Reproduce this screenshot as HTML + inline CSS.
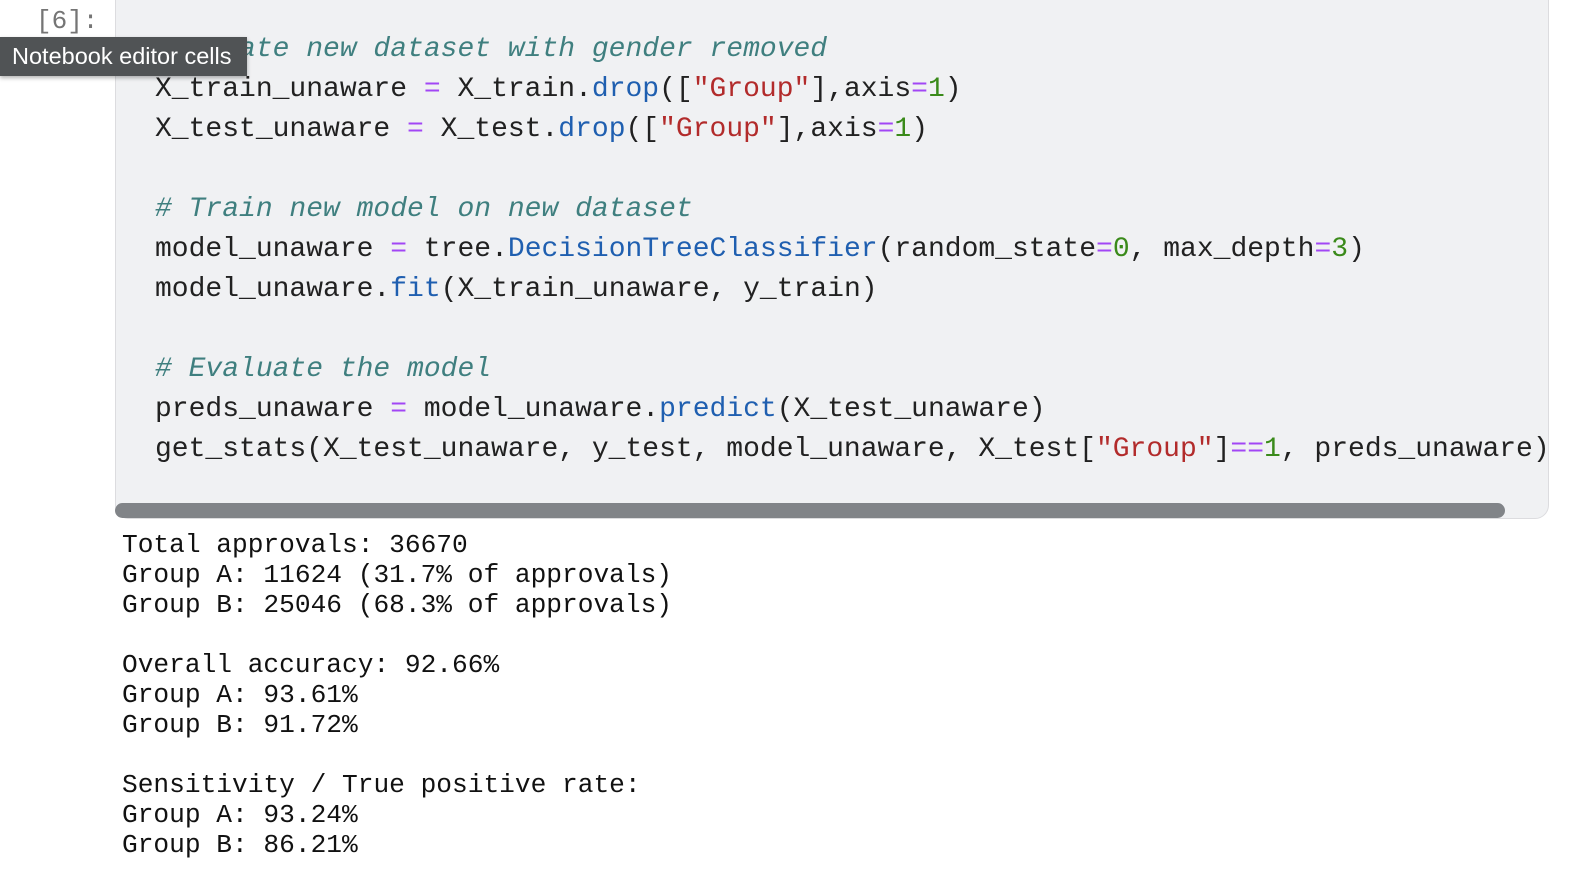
<!DOCTYPE html>
<html><head><meta charset="utf-8"><style>
body{margin:0;width:1590px;height:874px;background:#fff;position:relative;overflow:hidden;font-family:"Liberation Mono",monospace}
.prompt{position:absolute;left:36px;top:5px;font-size:26px;color:#757575;line-height:32px}
.cell{position:absolute;left:115px;top:-20px;width:1432px;height:537px;background:#f0f1f3;border:1px solid #dcdcdf;border-radius:14px;overflow:hidden}
pre{margin:0;font-family:"Liberation Mono",monospace}
.code{position:absolute;left:155px;top:30px;font-size:28px;line-height:40px;color:#212121;white-space:pre}
.c{color:#3f7f7f;font-style:italic}.o{color:#a246f5}.s{color:#b22b2b}.n{color:#3a8a1a}.f{color:#1f5fb0}
.sb{position:absolute;left:115px;top:503px;width:1390px;height:15px;background:#818488;border-radius:8px}
.out{position:absolute;left:122px;top:530px;font-size:26.2px;line-height:30px;color:#111;white-space:pre}
.tip{position:absolute;left:0;top:37px;width:247px;height:39px;background:#505355;color:#fff;font-family:"Liberation Sans",sans-serif;font-size:23.5px;line-height:39px;padding-left:12px;box-sizing:border-box;box-shadow:0 2px 4px rgba(0,0,0,.3);white-space:nowrap}
</style></head><body>
<div class="prompt">[6]:</div>
<div class="cell"></div>
<pre class="code"><span class="c"># Create new dataset with gender removed</span>
X_train_unaware <span class="o">=</span> X_train.<span class="f">drop</span>([<span class="s">"Group"</span>],axis<span class="o">=</span><span class="n">1</span>)
X_test_unaware <span class="o">=</span> X_test.<span class="f">drop</span>([<span class="s">"Group"</span>],axis<span class="o">=</span><span class="n">1</span>)

<span class="c"># Train new model on new dataset</span>
model_unaware <span class="o">=</span> tree.<span class="f">DecisionTreeClassifier</span>(random_state<span class="o">=</span><span class="n">0</span>, max_depth<span class="o">=</span><span class="n">3</span>)
model_unaware.<span class="f">fit</span>(X_train_unaware, y_train)

<span class="c"># Evaluate the model</span>
preds_unaware <span class="o">=</span> model_unaware.<span class="f">predict</span>(X_test_unaware)
get_stats(X_test_unaware, y_test, model_unaware, X_test[<span class="s">"Group"</span>]<span class="o">==</span><span class="n">1</span>, preds_unaware)</pre>
<div class="sb"></div>
<pre class="out">Total approvals: 36670
Group A: 11624 (31.7% of approvals)
Group B: 25046 (68.3% of approvals)

Overall accuracy: 92.66%
Group A: 93.61%
Group B: 91.72%

Sensitivity / True positive rate:
Group A: 93.24%
Group B: 86.21%</pre>
<div class="tip">Notebook editor cells</div>
</body></html>
